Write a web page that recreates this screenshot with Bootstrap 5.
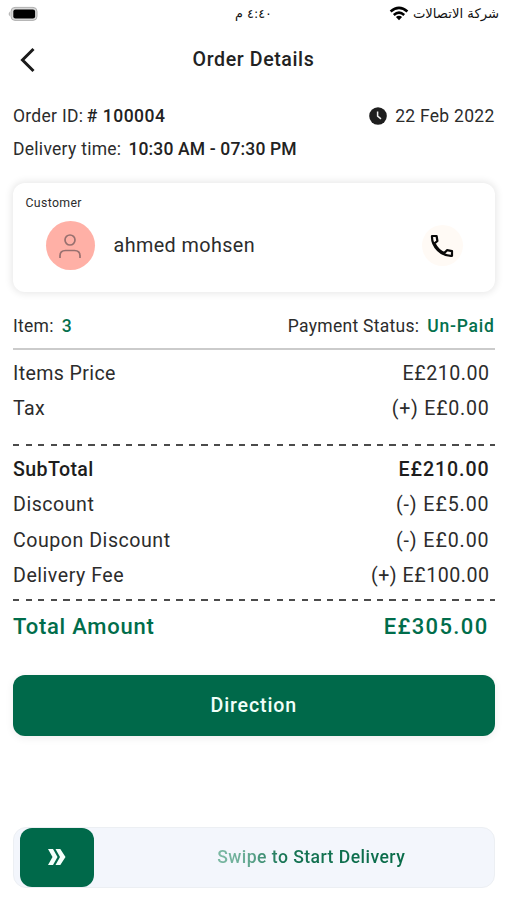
<!DOCTYPE html>
<html lang="en">
<head>
<meta charset="utf-8">
<meta name="viewport" content="width=device-width, initial-scale=1">
<title>Order Details</title>
<link href="https://cdn.jsdelivr.net/npm/bootstrap@5.3.0/dist/css/bootstrap.min.css" rel="stylesheet">
<style>
body{font-family:Roboto,"Noto Sans",sans-serif;color:#2c2c2c;font-size:17.5px;line-height:24px;height:900px;overflow:hidden;background:#fff}
.page{padding:0 12.5px 0 13px}
.status{height:28px;padding:0 8px 0 8px;color:#111;display:grid;grid-template-columns:1fr auto 1fr}
.status-text{font-family:"DejaVu Sans",sans-serif;font-size:13.2px;line-height:28px;white-space:nowrap}
.status-time{font-size:12.8px;font-weight:500}
.topbar{height:64px;grid-template-columns:1fr auto 1fr;display:grid;padding:0 8px}
.title{font-size:19.6px;font-weight:500;color:#222;letter-spacing:.6px}
.meta{height:33px}
.meta-first{margin-top:7px}
.strong{font-weight:500;color:#222}
.order-no{letter-spacing:.5px;margin-left:-1px}
.time-range{letter-spacing:.15px;margin-left:7px}
.green{color:#04704d}
.customer{height:109px;border:0;border-radius:12px;box-shadow:0 0 7px 2px rgba(0,0,0,.085);margin-top:18px;padding:12px 32px 0 12.5px}
.cap-label{font-size:12.3px;line-height:17px;letter-spacing:.35px}
.person{margin-top:9px;padding-left:20px}
.avatar{width:49px;height:49px;background:#ffb0a6}
.name{font-size:19.8px;letter-spacing:.4px;margin-left:19px}
.phone{width:41px;height:41px;background:#fffaf5}
.summary{height:58px;padding-top:11px;border-bottom:2px solid #cbcbcb}
.group{padding-top:6px}
.line-item{height:35.5px;font-size:19.6px;padding-right:5px}
.line-item.strong{color:#1d1d1d}
.dash{height:2px;background:repeating-linear-gradient(90deg,#4b4b4b 0 6.4px,transparent 6.4px 12.55px)}
.dash-upper{margin-top:17px}
.dash-lower{margin-top:5px}
.total{height:50px;font-size:22px;font-weight:500;color:#006d4b;padding:1px 6px 0 0}
.direction{height:61px;border-radius:12px;background:#00694a;color:#f0fff9;font-size:19.6px;font-weight:500;box-shadow:0 2px 9px rgba(0,0,0,.07);margin-top:24px;letter-spacing:.85px}
.direction:hover{background:#005c40;color:#fff}
.swipe{height:61px;margin-top:90.5px;border:1px solid #eceff3;border-radius:13px;background:#f3f6fc;padding-left:6px}
.thumb{width:74px;height:59px;border-radius:12px;background:#00694a}
.swipe-text{font-size:17.6px;font-weight:500;letter-spacing:.45px;margin-left:35px;background:linear-gradient(90deg,#7db9a4 0,#69ac96 28px,#177454 66px,#086b49 100%);-webkit-background-clip:text;background-clip:text;color:transparent}
.k1{letter-spacing:.28px}.k2{letter-spacing:.38px}.k3{letter-spacing:.52px}.k4{letter-spacing:.75px}.k5{letter-spacing:.9px}.k6{letter-spacing:1.35px}
</style>
<script src="https://cdn.jsdelivr.net/npm/bootstrap@5.3.0/dist/js/bootstrap.bundle.min.js" defer></script>
</head>
<body>
<header>
  <div class="status align-items-center">
    <svg width="31" height="16" viewBox="0 -2 31 16"><path d="M1.800 3.500Q-.4 5.900 1.800 8.300z" fill="#aaa"/><rect x="3" y="-.6" width="26" height="13" rx="4" fill="#d8d8d8" stroke="#b0b0b0" stroke-width="1"/><rect x="5.300" y="1.400" width="21.800" height="9" rx="2.200" fill="#000"/></svg>
    <span class="status-text status-time" dir="rtl">٤:٤٠ م</span>
    <div class="d-flex justify-content-end align-items-center gap-1">
      <svg width="20" height="16" viewBox="0 0 20 16" fill="none" stroke="#000" stroke-width="2.600"><path d="M1.600 5.500Q10-1.900 18.400 5.500M4.800 8.900Q10 4.400 15.200 8.900"/><path d="M6.900 11.100Q10 8.500 13.100 11.100L10 14.200Z" fill="#000" stroke="none"/></svg>
      <span class="status-text" dir="rtl">شركة الاتصالات</span>
    </div>
  </div>
  <div class="topbar align-items-center">
    <svg width="30" height="30" viewBox="0 0 30 30" fill="none" stroke="#1b1b1b" stroke-width="3"><path d="M25.500 4L14.500 15l11 11"/></svg>
    <h1 class="title m-0">Order Details</h1><span></span>
  </div>
</header>
<main class="page">
  <div class="meta meta-first d-flex align-items-center justify-content-between">
    <span class="k1">Order ID: <span class="strong order-no">#&nbsp;100004</span></span>
    <span class="d-flex align-items-center gap-2 k1"><svg width="18" height="18" viewBox="0 0 18 18"><circle cx="9" cy="9" r="8.800" fill="#1e1e1e"/><path d="M8.600 4.500V9.200L12 11.800" fill="none" stroke="#eee" stroke-width="1.500"/></svg>22 Feb 2022</span>
  </div>
  <div class="meta d-flex align-items-center k1">Delivery time:<span class="strong time-range">10:30 AM - 07:30 PM</span></div>
  <section class="card customer">
    <div class="cap-label">Customer</div>
    <div class="person d-flex align-items-center">
      <span class="avatar rounded-circle d-flex align-items-center justify-content-center"><svg width="24" height="26" viewBox="0 0 24 26" fill="none" stroke="#98706f" stroke-width="1.700"><circle cx="12" cy="7" r="5"/><path d="M2 25v-2q0-5.500 5.500-5.500h9q5.500 0 5.500 5.500v2"/></svg></span>
      <span class="name">ahmed mohsen</span>
      <span class="phone rounded-circle d-flex align-items-center justify-content-center ms-auto"><svg width="24" height="24" viewBox="0 0 24 24" fill="none" stroke="#090909" stroke-width="2.200" stroke-linejoin="round"><path d="M2 2h4.600l.8 5-2.900 2.400C6.500 13.500 10 17.200 14.400 19L17 16.200l5 1v4.600C11.500 22.500 1.500 12.500 2 2z"/></svg></span>
    </div>
  </section>
  <div class="summary d-flex align-items-center justify-content-between">
    <span class="k1">Item:<span class="strong green ms-2">3</span></span>
    <span class="k1">Payment Status:<span class="strong green ms-2 k4">Un-Paid</span></span>
  </div>
  <div class="group">
    <div class="line-item d-flex align-items-center justify-content-between k2"><span>Items Price</span><span class="k3">E£210.00</span></div>
    <div class="line-item d-flex align-items-center justify-content-between k2"><span>Tax</span><span class="k4">(+) E£0.00</span></div>
  </div>
  <div class="dash dash-upper"></div>
  <div class="group">
    <div class="line-item strong d-flex align-items-center justify-content-between k2"><span>SubTotal</span><span class="k5">E£210.00</span></div>
    <div class="line-item d-flex align-items-center justify-content-between k3"><span>Discount</span><span class="k5">(-) E£5.00</span></div>
    <div class="line-item d-flex align-items-center justify-content-between k3"><span>Coupon Discount</span><span class="k5">(-) E£0.00</span></div>
    <div class="line-item d-flex align-items-center justify-content-between k3"><span>Delivery Fee</span><span class="k3">(+) E£100.00</span></div>
  </div>
  <div class="dash dash-lower"></div>
  <div class="total d-flex align-items-center justify-content-between"><span class="k4">Total Amount</span><span class="k6">E£305.00</span></div>
  <button class="btn direction w-100 d-flex align-items-center justify-content-center border-0">Direction</button>
  <div class="swipe d-flex align-items-center">
    <div class="thumb d-flex align-items-center justify-content-center"><svg width="18" height="16" viewBox="0 0 18 16" fill="#f4fffb"><path d="M0 0h5l4.500 8L5 16H0l4.500-8zM7.500 0h4.800L17.500 8l-5.200 8H7.500l4.500-8z"/></svg></div>
    <div class="flex-fill text-center"><span class="swipe-text">Swipe to Start Delivery</span></div>
  </div>
</main>
</body>
</html>
